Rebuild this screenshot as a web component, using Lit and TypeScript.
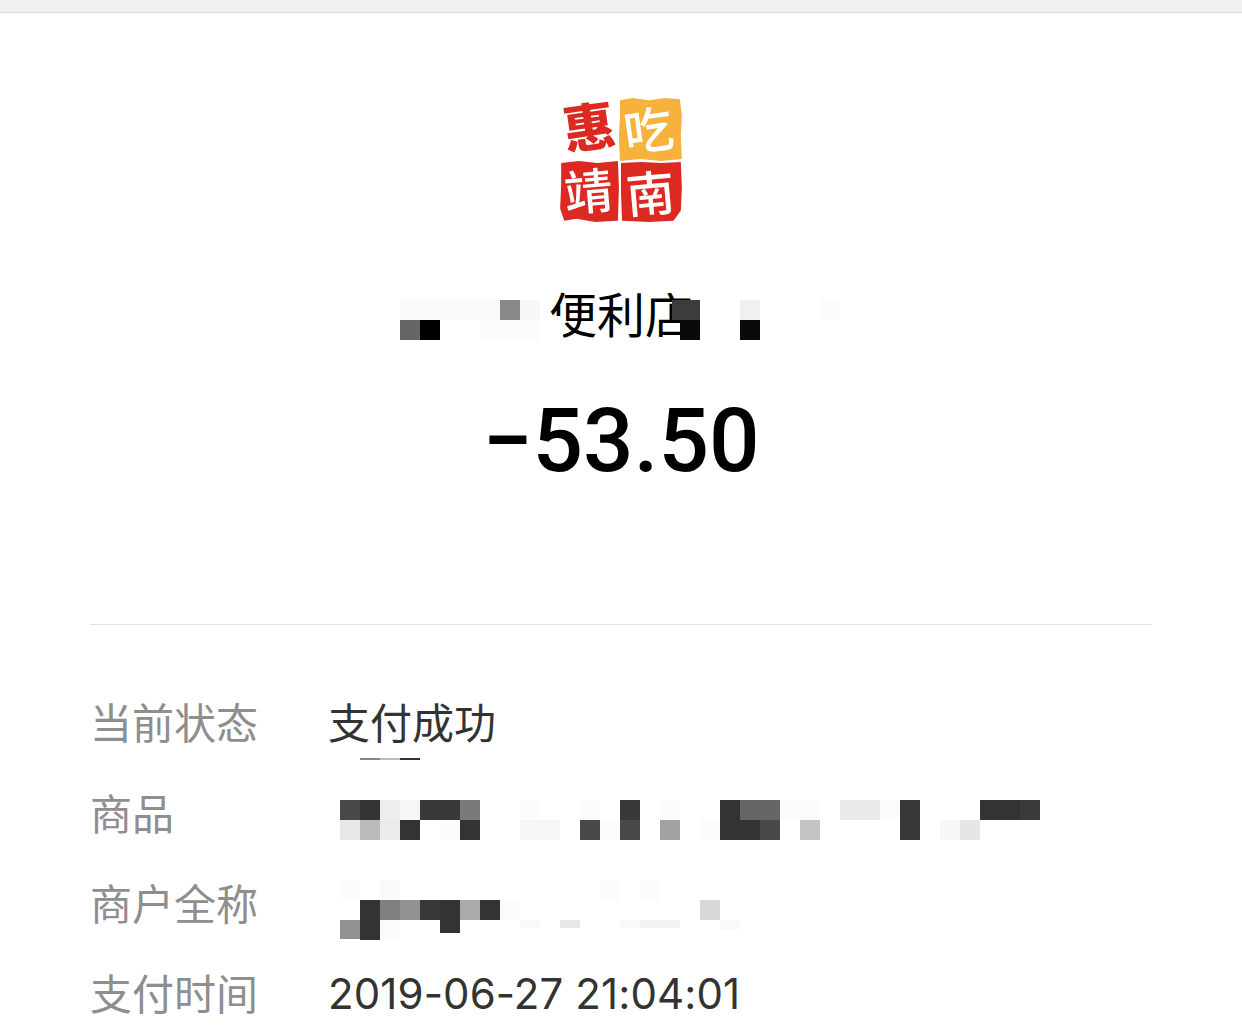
import { LitElement, html, css, svg } from "lit";
import { customElement } from "lit/decorators.js";

type R = [number, number, number, number, string];
const cells = (y: number, list: [number, string][], h = 20): R[] => list.map(([x, c]) => [x, y, 20, h, c]);

const MOSAIC: R[] = [
  // title
  [400, 300, 100, 20, "#fafafa"], [500, 300, 20, 20, "#888888"], [520, 300, 20, 20, "#f8f8f8"],
  [672, 300, 28, 20, "#3c3c3c"], [740, 300, 20, 20, "#f0f0f0"], [820, 300, 20, 20, "#fbfbfb"],
  [400, 320, 20, 20, "#666666"], [420, 320, 20, 20, "#000000"], [480, 320, 60, 20, "#fbfbfb"],
  [680, 320, 20, 20, "#0a0a0a"], [740, 320, 20, 20, "#0a0a0a"],
  // patch hiding the radical of the first title glyph
  [546, 316, 17, 30, "#ffffff"],
  // status underline fragment
  [360, 758, 20, 2, "#888888"], [380, 758, 20, 2, "#bbbbbb"], [400, 758, 20, 2, "#333333"],
  // product
  ...cells(800, [[340, "#484848"], [360, "#333333"], [380, "#eeeeee"], [400, "#f6f6f6"], [420, "#393939"], [440, "#393939"], [460, "#7a7a7a"], [520, "#fcfcfc"], [580, "#fcfcfc"], [620, "#383838"], [660, "#fcfcfc"], [720, "#333333"], [740, "#666666"], [760, "#666666"], [780, "#fbfbfb"], [800, "#fbfbfb"], [840, "#eaeaea"], [860, "#eaeaea"], [880, "#fbfbfb"], [900, "#383838"], [980, "#333333"], [1000, "#333333"], [1020, "#3a3a3a"]]),
  ...cells(820, [[340, "#e8e8e8"], [360, "#bbbbbb"], [380, "#ebebeb"], [400, "#333333"], [440, "#fcfcfc"], [460, "#333333"], [520, "#f6f6f6"], [540, "#f6f6f6"], [580, "#484848"], [600, "#fcfcfc"], [620, "#484848"], [660, "#a2a2a2"], [700, "#fbfbfb"], [720, "#333333"], [740, "#333333"], [760, "#484848"], [800, "#c4c4c4"], [900, "#383838"], [940, "#f8f8f8"], [960, "#e6e6e6"]]),
  // merchant
  ...cells(880, [[340, "#fcfcfc"], [380, "#f9f9f9"], [600, "#fbfbfb"], [640, "#fbfbfb"]]),
  ...cells(900, [[360, "#333333"], [380, "#808080"], [400, "#929292"], [420, "#383838"], [440, "#333333"], [460, "#aaaaaa"], [480, "#333333"], [500, "#fbfbfb"], [700, "#d8d8d8"]]),
  [340, 920, 20, 19, "#929292"], [360, 920, 20, 20, "#333333"], [380, 920, 20, 19, "#fbfbfb"], [440, 920, 20, 13, "#333333"],
  [520, 920, 20, 8, "#f9f9f9"], [560, 920, 20, 8, "#e8e8e8"], [620, 920, 20, 8, "#f9f9f9"], [640, 920, 40, 8, "#f2f2f2"], [720, 920, 20, 10, "#fafafa"],
];

const ROWS: [string, string][] = [
  ["当前状态", "支付成功"],
  ["商品", ""],
  ["商户全称", ""],
  ["支付时间", "2019-06-27 21:04:01"],
];

@customElement("app-root")
export class AppRoot extends LitElement {
  static styles = css`
    :host {
      display: block;
      position: relative;
      width: 1242px;
      height: 1036px;
      overflow: hidden;
      background: #fff;
      font-family: "Noto Sans CJK SC", "Noto Sans", sans-serif;
    }
    .topbar {
      height: 12px;
      background: #f0f0f0;
      border-bottom: 1px solid #dcdcdc;
    }
    .head {
      display: flex;
      flex-direction: column;
      align-items: center;
      padding-top: 82px;
    }
    .logo {
      display: block;
      width: 130px;
      height: 130px;
      overflow: visible;
    }
    .logo text {
      font-family: "Noto Sans CJK SC", sans-serif;
    }
    .logo .heavy { font-weight: 900; }
    .logo .light { font-weight: 500; }
    .title {
      margin-top: 56px;
      height: 62px;
      font-size: 48px;
      line-height: 62px;
      font-weight: 400;
      color: #000;
    }
    .amount {
      margin-top: 46px;
      height: 104px;
      font-family: Roboto, sans-serif;
      font-weight: 500;
      font-size: 89px;
      line-height: 104px;
      color: #000;
    }
    .divider {
      height: 1px;
      margin: 131px 90px 0;
      background: #e4e4e4;
    }
    .rows {
      padding: 51px 0 0 90px;
      display: grid;
      grid-template-columns: 238px 1fr;
      grid-auto-rows: 90.4px;
      align-items: center;
      font-size: 42px;
      line-height: 62px;
    }
    .label { color: #8e8e8e; font-weight: 400; }
    .value { color: #333; }
    .num { font-family: Inter, Roboto, sans-serif; font-weight: 400; letter-spacing: 0.1px; padding-top: 3px; }
    .mosaic { position: absolute; left: 0; top: 0; }
    .mosaic div { position: absolute; }
  `;

  private logo() {
    return svg`
      <path d="M60 5 L72 3 L88 5 L104 3 L118 4 L120 20 L119 40 L120 62 L100 64 L80 62 L60 64 L59 40 L60 20 Z" fill="#f6b23c"/>
      <path d="M3 66 L20 64 L38 66 L58 64 L59 90 L58 122 L36 123 L18 120 L6 122 L2 110 L3 88 Z" fill="#dc2a22"/>
      <path d="M61 66 L80 65 L100 66 L119 65 L120 90 L119 112 L112 122 L88 123 L62 122 L61 95 Z" fill="#dc2a22"/>
      <text class="heavy" x="5" y="50" font-size="50" fill="#dc2a22" transform="rotate(-8 30 30)">惠</text>
      <text class="light" x="63" y="52" font-size="48" fill="#fff" transform="rotate(-8 90 30)">吃</text>
      <text class="light" x="6" y="111" font-size="47" fill="#fff" transform="rotate(-5 30 95)">靖</text>
      <text class="light" x="66" y="113" font-size="47" fill="#fff" transform="rotate(-5 90 95)">南</text>
    `;
  }

  render() {
    return html`
      <div class="topbar"></div>
      <div class="head">
        <svg class="logo" viewBox="0 0 122 126">${this.logo()}</svg>
        <div class="title">便利店</div>
        <div class="amount">−53.50</div>
      </div>
      <div class="divider"></div>
      <div class="rows">
        ${ROWS.map(([k, v]) => html`
          <div class="label">${k}</div>
          <div class="value ${/\d/.test(v) ? "num" : ""}">${v}</div>
        `)}
      </div>
      <div class="mosaic">
        ${MOSAIC.map(([x, y, w, h, c]) => html`<div style="left:${x}px;top:${y}px;width:${w}px;height:${h}px;background:${c}"></div>`)}
      </div>
    `;
  }
}
